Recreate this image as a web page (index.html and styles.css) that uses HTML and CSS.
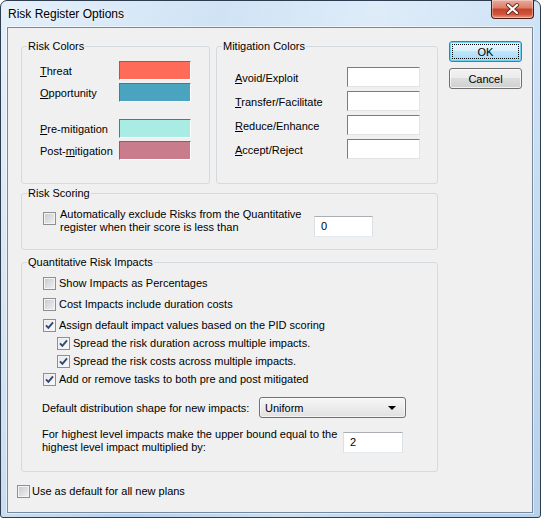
FILE: index.html
```html
<!DOCTYPE html>
<html lang="en">
<head>
    <meta charset="UTF-8">
    <meta name="viewport" content="width=device-width, initial-scale=1.0">
    <title>Risk Register Options</title>
    <link rel="stylesheet" href="styles.css">
</head>
<body>
    <div class="window">
        <div class="titlebar">
            <span class="title">Risk Register Options</span>
            <button class="close" aria-label="Close">
                <svg width="41" height="16" viewBox="0 0 41 16">
                    <path d="M16 4 L25 12 M25 4 L16 12" stroke="#6b2418" stroke-width="4" stroke-linecap="round"/>
                    <path d="M16 4 L25 12 M25 4 L16 12" stroke="#fff" stroke-width="2.2" stroke-linecap="round"/>
                </svg>
            </button>
        </div>

        <div class="client">
            <div class="content">
                <div class="groups">
                    <div class="top-row">
                        <fieldset class="group colors">
                            <legend>Risk Colors</legend>
                            <div class="color-list">
                                <div class="color-row"><span class="name"><u>T</u>hreat</span><span class="swatch threat"></span></div>
                                <div class="color-row"><span class="name"><u>O</u>pportunity</span><span class="swatch opportunity"></span></div>
                                <div class="color-row spaced"><span class="name"><u>P</u>re-mitigation</span><span class="swatch pre"></span></div>
                                <div class="color-row"><span class="name">Post-<u>m</u>itigation</span><span class="swatch post"></span></div>
                            </div>
                        </fieldset>

                        <fieldset class="group mitigation">
                            <legend>Mitigation Colors</legend>
                            <div class="color-list">
                                <div class="mit-row"><span class="name"><u>A</u>void/Exploit</span><span class="mit-box"></span></div>
                                <div class="mit-row"><span class="name"><u>T</u>ransfer/Facilitate</span><span class="mit-box"></span></div>
                                <div class="mit-row"><span class="name"><u>R</u>educe/Enhance</span><span class="mit-box"></span></div>
                                <div class="mit-row"><span class="name"><u>A</u>ccept/Reject</span><span class="mit-box"></span></div>
                            </div>
                        </fieldset>
                    </div>

                    <fieldset class="group scoring">
                        <legend>Risk Scoring</legend>
                        <div class="scoring-row">
                            <span class="check"></span>
                            <span class="wrap-text">Automatically exclude Risks from the Quantitative register when their score is less than</span>
                            <span class="textbox">0</span>
                        </div>
                    </fieldset>

                    <fieldset class="group impacts">
                        <legend>Quantitative Risk Impacts</legend>
                        <div class="opt spaced"><span class="check"></span>Show Impacts as Percentages</div>
                        <div class="opt spaced"><span class="check"></span>Cost Impacts include duration costs</div>
                        <div class="opt"><span class="check on"><svg viewBox="0 0 11 11"><path d="M2 5.3 L4.4 7.8 L9 2.4" fill="none" stroke="#34476f" stroke-width="1.9"/></svg></span>Assign default impact values based on the PID scoring</div>
                        <div class="opt sub"><span class="check on"><svg viewBox="0 0 11 11"><path d="M2 5.3 L4.4 7.8 L9 2.4" fill="none" stroke="#34476f" stroke-width="1.9"/></svg></span>Spread the risk duration across multiple impacts.</div>
                        <div class="opt sub"><span class="check on"><svg viewBox="0 0 11 11"><path d="M2 5.3 L4.4 7.8 L9 2.4" fill="none" stroke="#34476f" stroke-width="1.9"/></svg></span>Spread the risk costs across multiple impacts.</div>
                        <div class="opt"><span class="check on"><svg viewBox="0 0 11 11"><path d="M2 5.3 L4.4 7.8 L9 2.4" fill="none" stroke="#34476f" stroke-width="1.9"/></svg></span>Add or remove tasks to both pre and post mitigated</div>

                        <div class="shape-row">
                            <span class="shape-label">Default distribution shape for new impacts:</span>
                            <span class="combo">Uniform<span class="arrow"></span></span>
                        </div>

                        <div class="bound-row">
                            <span class="wrap-text">For highest level impacts make the upper bound equal to the highest level impact multiplied by:</span>
                            <span class="textbox">2</span>
                        </div>
                    </fieldset>
                </div>

                <div class="buttons">
                    <button class="btn default"><span>OK</span></button>
                    <button class="btn">Cancel</button>
                </div>
            </div>

            <div class="footer opt"><span class="check"></span>Use as default for all new plans</div>
        </div>
    </div>
</body>
</html>
```

FILE: styles.css
```css
* {
    box-sizing: border-box;
}
body {
    margin: 0;
    background: #ffffff;
    font-family: "Liberation Sans", Arial, sans-serif;
    font-size: 11px;
    color: #000;
}
.window {
    width: 541px;
    height: 518px;
    display: flex;
    flex-direction: column;
    padding: 0 7px 4px 6px;
    border: 1px solid #2d3c4e;
    border-radius: 7px 7px 3px 3px;
    background:
        linear-gradient(100deg, rgba(255,255,255,0.45) 0%, rgba(255,255,255,0) 35%, rgba(255,255,255,0.3) 60%, rgba(255,255,255,0) 85%),
        linear-gradient(#d0e4f6, #b7d1eb);
}
.titlebar {
    height: 26px;
    display: flex;
    justify-content: space-between;
    align-items: flex-start;
}
.title {
    line-height: 26px;
    padding-left: 1px;
    font-size: 12px;
    color: #000;
    text-shadow: 0 0 6px #fff;
}
.close {
    width: 43px;
    height: 19px;
    margin: -1px -1px 0 0;
    padding: 0;
    border: 1px solid #4d1b14;
    border-top: none;
    border-radius: 0 0 4px 4px;
    background: linear-gradient(#e9aa9c 0%, #dc7c66 45%, #c5412a 50%, #d0553b 80%, #e3a089 100%);
    box-shadow: inset 0 0 0 1px rgba(255,255,255,0.35);
}
.close svg {
    display: block;
}
.client {
    flex: 1;
    border: 1px solid #76899e;
    background: #f0f0f0;
    padding: 12px 0 0 13px;
    box-shadow: 0 0 0 1px rgba(255,255,255,0.5);
}
.content {
    display: flex;
    gap: 11px;
}
.groups {
    width: 417px;
    display: flex;
    flex-direction: column;
}
.top-row {
    display: flex;
    gap: 6px;
}
.group {
    margin: 0;
    padding: 0;
    min-width: 0;
    border: 1px solid #d5dadf;
    border-radius: 3px;
}
.group legend {
    margin-left: 5px;
    padding: 0 1px;
    line-height: 13px;
}
.colors {
    width: 189px;
    height: 144px;
}
.mitigation {
    width: 222px;
    height: 144px;
}
.scoring {
    margin-top: 3px;
    height: 63px;
}
.impacts {
    margin-top: 6px;
    height: 216px;
}
.color-list {
    padding: 8px 0 0 18px;
}
.mitigation .color-list {
    padding-top: 14px;
}
.color-row {
    display: flex;
    align-items: center;
    height: 19px;
    margin-bottom: 3px;
}
.color-row.spaced {
    margin-top: 17px;
}
.colors .name {
    width: 79px;
}
.swatch {
    width: 72px;
    height: 19px;
    border-top: 1px solid #6e6e6e;
    border-left: 1px solid #6e6e6e;
    border-right: 1px solid #fff;
    border-bottom: 1px solid #fff;
}
.threat { background: #fe6b59; }
.opportunity { background: #4ba4bf; }
.pre { background: #a9ece4; }
.post { background: #c97c8b; }
.mit-row {
    display: flex;
    align-items: center;
    height: 20px;
    margin-bottom: 4px;
}
.mitigation .name {
    width: 112px;
    padding-top: 2px;
}
.mit-box {
    width: 73px;
    height: 20px;
    background: #fff;
    border-top: 1px solid #7c7c7c;
    border-left: 1px solid #7c7c7c;
    border-right: 1px solid #e4e4e4;
    border-bottom: 1px solid #e4e4e4;
}
.check {
    flex: none;
    width: 13px;
    height: 13px;
    border: 1px solid #8e8f8f;
    background: linear-gradient(135deg, #c4c8ce, #f2f2f2);
    box-shadow: inset 0 0 0 1px #f4f4f4;
}
.check.on {
    background: linear-gradient(135deg, #e4e6ea, #fbfbfb);
}
.check svg {
    display: block;
    width: 11px;
    height: 11px;
}
.scoring-row {
    display: flex;
    align-items: flex-start;
    padding: 8px 0 0 21px;
}
.scoring-row .check {
    margin-top: 4px;
}
.wrap-text {
    line-height: 13px;
}
.scoring-row .wrap-text {
    width: 254px;
    margin-left: 4px;
}
.textbox {
    height: 21px;
    background: #fff;
    padding-left: 6px;
    line-height: 19px;
    border: 1px solid #dbdfe6;
    border-top-color: #abadb3;
    border-bottom-color: #e3e9ef;
}
.scoring-row .textbox {
    width: 59px;
    margin-top: 8px;
}
.impacts {
    padding-top: 5px;
}
.opt {
    display: flex;
    align-items: center;
    gap: 3px;
    height: 18px;
    padding-left: 21px;
}
.opt.spaced {
    margin-bottom: 3px;
}
.opt.sub {
    padding-left: 35px;
}
.shape-row {
    display: flex;
    align-items: center;
    margin-top: 9px;
    padding-left: 20px;
}
.shape-label {
    width: 217px;
}
.combo {
    width: 147px;
    height: 21px;
    display: flex;
    align-items: center;
    justify-content: space-between;
    padding: 0 9px 0 5px;
    border: 1px solid #707070;
    border-radius: 3px;
    background: linear-gradient(#f7f7f7, #e1e1e1);
    box-shadow: inset 0 0 0 1px rgba(255,255,255,0.6);
}
.arrow {
    width: 0;
    height: 0;
    border-left: 4px solid transparent;
    border-right: 4px solid transparent;
    border-top: 4px solid #000;
}
.bound-row {
    display: flex;
    align-items: flex-start;
    margin-top: 10px;
    padding-left: 20px;
}
.bound-row .wrap-text {
    width: 301px;
}
.bound-row .textbox {
    width: 60px;
    margin-top: 4px;
}
.buttons {
    display: flex;
    flex-direction: column;
    gap: 6px;
    margin-top: 1px;
}
.btn {
    width: 73px;
    height: 21px;
    padding: 0;
    font-family: inherit;
    font-size: 11px;
    color: #000;
    border: 1px solid #707070;
    border-radius: 3px;
    background: linear-gradient(#f2f2f2 0%, #ebebeb 50%, #dddddd 50%, #cfcfcf 100%);
    box-shadow: inset 0 0 0 1px rgba(255,255,255,0.7);
}
.btn.default {
    border-color: #3c7fb1;
    background: linear-gradient(#eaf6fd 0%, #d9f0fc 50%, #bee6fd 50%, #a7d9f5 100%);
    box-shadow: inset 0 0 0 1px #6fd2f6;
    outline: 1px dotted #000;
    outline-offset: -4px;
}
.footer {
    margin: 10px 0 0 -4px;
    padding-left: 0;
    gap: 2px;
}
```
